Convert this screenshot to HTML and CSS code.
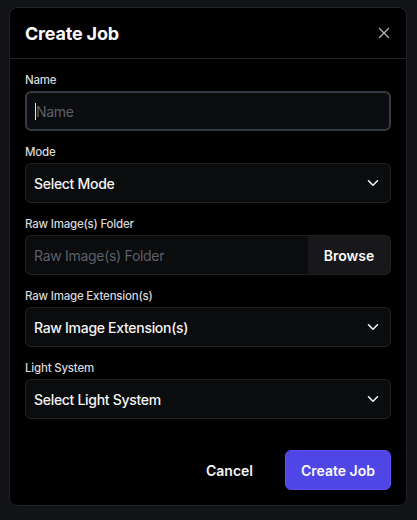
FILE: index.html
```html
<!DOCTYPE html>
<html>
<head>
<meta charset="utf-8">
<link rel="stylesheet" href="styles.css">
</head>
<body>
<div class="modal">
  <div class="header">
    <div class="title">Create Job</div>
    <svg class="close" width="12" height="12" viewBox="0 0 12 12"><path d="M1.5 1.5L10.5 10.5M10.5 1.5L1.5 10.5" stroke="#b4b4b8" stroke-width="1.3" stroke-linecap="round" fill="none"/></svg>
  </div>
  <div class="body">
    <div class="field">
      <div class="label">Name</div>
      <div class="input focused"><span class="caret"></span><span class="ph">Name</span></div>
    </div>
    <div class="field">
      <div class="label">Mode</div>
      <div class="input select"><span>Select Mode</span><svg width="12" height="8" viewBox="0 0 12 8"><path d="M1.5 1.8L6 6.2L10.5 1.8" stroke="#f4f4f5" stroke-width="1.6" stroke-linecap="round" stroke-linejoin="round" fill="none"/></svg></div>
    </div>
    <div class="field">
      <div class="label">Raw Image(s) Folder</div>
      <div class="group">
        <div class="input grow"><span class="ph">Raw Image(s) Folder</span></div>
        <div class="browse">Browse</div>
      </div>
    </div>
    <div class="field">
      <div class="label">Raw Image Extension(s)</div>
      <div class="input select"><span>Raw Image Extension(s)</span><svg width="12" height="8" viewBox="0 0 12 8"><path d="M1.5 1.8L6 6.2L10.5 1.8" stroke="#f4f4f5" stroke-width="1.6" stroke-linecap="round" stroke-linejoin="round" fill="none"/></svg></div>
    </div>
    <div class="field">
      <div class="label">Light System</div>
      <div class="input select"><span>Select Light System</span><svg width="12" height="8" viewBox="0 0 12 8"><path d="M1.5 1.8L6 6.2L10.5 1.8" stroke="#f4f4f5" stroke-width="1.6" stroke-linecap="round" stroke-linejoin="round" fill="none"/></svg></div>
    </div>
  </div>
  <div class="footer">
    <div class="btn ghost">Cancel</div>
    <div class="btn primary">Create Job</div>
  </div>
</div>
</body>
</html>
```
FILE: styles.css
```css
* { box-sizing: border-box; }
html, body { margin: 0; padding: 0; }
body {
  background: #121316;
  font-family: Inter, "Noto Sans", "Liberation Sans", sans-serif;
  color: #f4f4f5;
  padding: 7px 10px 0 9px;
  height: 520px;
}
.modal {
  width: 398px;
  height: 499px;
  background: #000;
  border: 1px solid #222327;
  border-radius: 8px;
  display: flex;
  flex-direction: column;
}
.header {
  height: 51px;
  border-bottom: 1px solid #222327;
  display: flex;
  align-items: center;
  justify-content: space-between;
  padding: 0 16px 0 15px;
}
.title {
  font-size: 18px;
  font-weight: 700;
  letter-spacing: -0.2px;
  color: #fafafa;
}
.close { display: block; }
.body {
  padding: 14px 15px 0 15px;
  display: flex;
  flex-direction: column;
  gap: 14px;
}
.field {
  display: flex;
  flex-direction: column;
  gap: 4px;
}
.label {
  font-size: 11.5px;
  line-height: 14px;
  font-weight: 500;
  letter-spacing: -0.2px;
  color: #d8d8dc;
}
.input {
  height: 40px;
  background: #0b0c0e;
  border: 1px solid #1f2024;
  border-radius: 6px;
  display: flex;
  align-items: center;
  padding: 0 8px;
  font-size: 14px;
  letter-spacing: -0.3px;
  font-weight: 500;
  color: #f4f4f5;
}
.input.focused {
  border: 2px solid #363b43;
  padding: 0 8px;
  background: #0c0d10;
}
.caret {
  display: inline-block;
  width: 1px;
  height: 17px;
  background: #e4e4e7;
}
.ph { color: #5c5f66; font-weight: 400; }
.select {
  justify-content: space-between;
  padding-right: 11px;
}
.select svg { display: block; }
.group { display: flex; }
.group .input.grow {
  flex: 1;
  border-radius: 6px 0 0 6px;
  border-right: none;
}
.browse {
  width: 83px;
  height: 40px;
  background: #18181b;
  border: 1px solid #1f2024;
  border-left: none;
  border-radius: 0 6px 6px 0;
  display: flex;
  align-items: center;
  justify-content: center;
  font-size: 14px;
  font-weight: 600;
  color: #fafafa;
}
.footer {
  margin-top: auto;
  padding: 0 15px 15px 15px;
  display: flex;
  justify-content: flex-end;
  gap: 8px;
}
.btn {
  height: 40px;
  border-radius: 6px;
  display: flex;
  align-items: center;
  justify-content: center;
  font-size: 14px;
  font-weight: 600;
}
.ghost {
  padding: 0 24px;
  color: #f4f4f5;
}
.primary {
  width: 106px;
  background: #4f46e5;
  border: 1px solid #5b52f0;
  color: #fafafa;
}
```
